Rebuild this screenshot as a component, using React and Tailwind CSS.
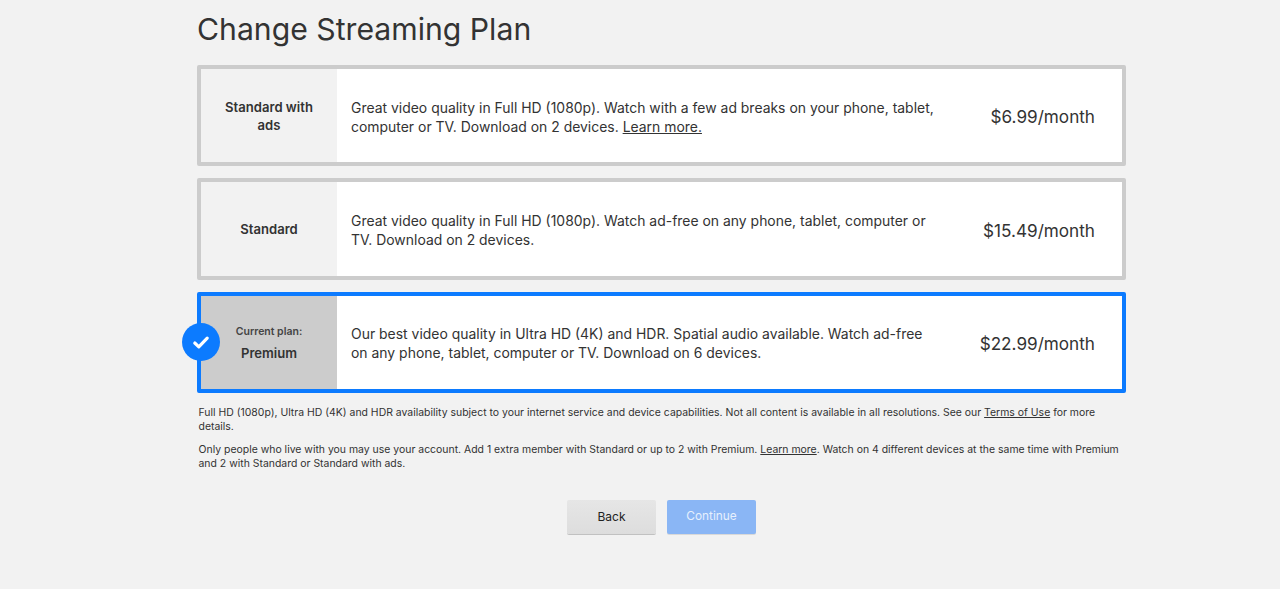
import React from "react";

const plans = [
  {
    name: "Standard with ads",
    price: "$6.99/month",
    desc: (
      <>
        Great video quality in Full HD (1080p). Watch with a few ad breaks on your phone, tablet, computer or TV.
        Download on 2 devices. <a className="underline">Learn more.</a>
      </>
    ),
  },
  {
    name: "Standard",
    price: "$15.49/month",
    desc: "Great video quality in Full HD (1080p). Watch ad-free on any phone, tablet, computer or TV. Download on 2 devices.",
  },
  {
    name: "Premium",
    price: "$22.99/month",
    current: true,
    desc: "Our best video quality in Ultra HD (4K) and HDR. Spatial audio available. Watch ad-free on any phone, tablet, computer or TV. Download on 6 devices.",
  },
];

function PlanRow({ plan }) {
  return (
    <div
      className={`relative flex h-[101.33px] rounded-[2px] border-[4px] bg-white ${
        plan.current ? "border-[#0c7bff]" : "border-[#cccccc]"
      }`}
    >
      {plan.current && (
        <div className="absolute left-[-19px] top-1/2 flex h-[38px] w-[38px] -translate-y-1/2 items-center justify-center rounded-full bg-[#0c7bff]">
          <svg width="18" height="15" viewBox="0 0 18 15" fill="none">
            <path d="M2.8 8l4 3.8L15.2 3.2" stroke="#fff" strokeWidth="3.2" strokeLinecap="round" strokeLinejoin="round" />
          </svg>
        </div>
      )}
      <div
        className={`flex w-[136px] shrink-0 flex-col items-center justify-center px-5 text-center font-semibold text-[#333] ${
          plan.current ? "bg-[#cccccc]" : "bg-[#f2f2f2]"
        }`}
      >
        {plan.current && <div className="mb-[3px] text-[10.5px] leading-[18px] text-[#444]">Current plan:</div>}
        <div className="text-[13.1px] leading-[18px]">{plan.name}</div>
      </div>
      <div className="flex items-center pl-[14px] pt-[2px] text-[13.95px] leading-[19px] text-[#333]">
        <div className="w-[590px]">{plan.desc}</div>
      </div>
      <div className="flex flex-1 items-center justify-end pr-[27px] pt-[3px] text-[17.15px] text-[#333]">
        {plan.price}
      </div>
    </div>
  );
}

export default function App() {
  return (
    <div className="min-h-[589px] bg-[#f2f2f2] pl-[197px] font-['Inter',sans-serif]">
      <div className="w-[929px]">
        <h1 className="pt-[9px] text-[30.2px] leading-[40px] text-[#333]">Change Streaming Plan</h1>
        <div className="mt-[16px] flex flex-col gap-[12px]">
          {plans.map((plan) => (
            <PlanRow key={plan.name} plan={plan} />
          ))}
        </div>
        <div className="mt-[13px] px-[1.5px] text-[10.45px] leading-[14px] text-[#333]">
          <p>
            Full HD (1080p), Ultra HD (4K) and HDR availability subject to your internet service and device capabilities.
            Not all content is available in all resolutions. See our <a className="underline">Terms of Use</a> for more
            details.
          </p>
          <p className="mt-[9px]">
            Only people who live with you may use your account. Add 1 extra member with Standard or up to 2 with Premium.{" "}
            <a className="underline">Learn more</a>. Watch on 4 different devices at the same time with Premium and 2 with
            Standard or Standard with ads.
          </p>
        </div>
        <div className="mt-[29px] flex justify-center gap-[11px]">
          <button className="h-[34px] w-[89px] rounded-[2px] bg-gradient-to-b from-[#e6e6e6] to-[#dddddd] text-[12px] text-[#222] shadow-[0_1px_0_rgba(0,0,0,0.2)]">
            Back
          </button>
          <button className="h-[34px] w-[89px] rounded-[2px] bg-[#8ab6f5] text-[11.85px] text-[#e6f0fd] shadow-[0_1px_0_rgba(0,0,0,0.1)]">
            Continue
          </button>
        </div>
      </div>
    </div>
  );
}
